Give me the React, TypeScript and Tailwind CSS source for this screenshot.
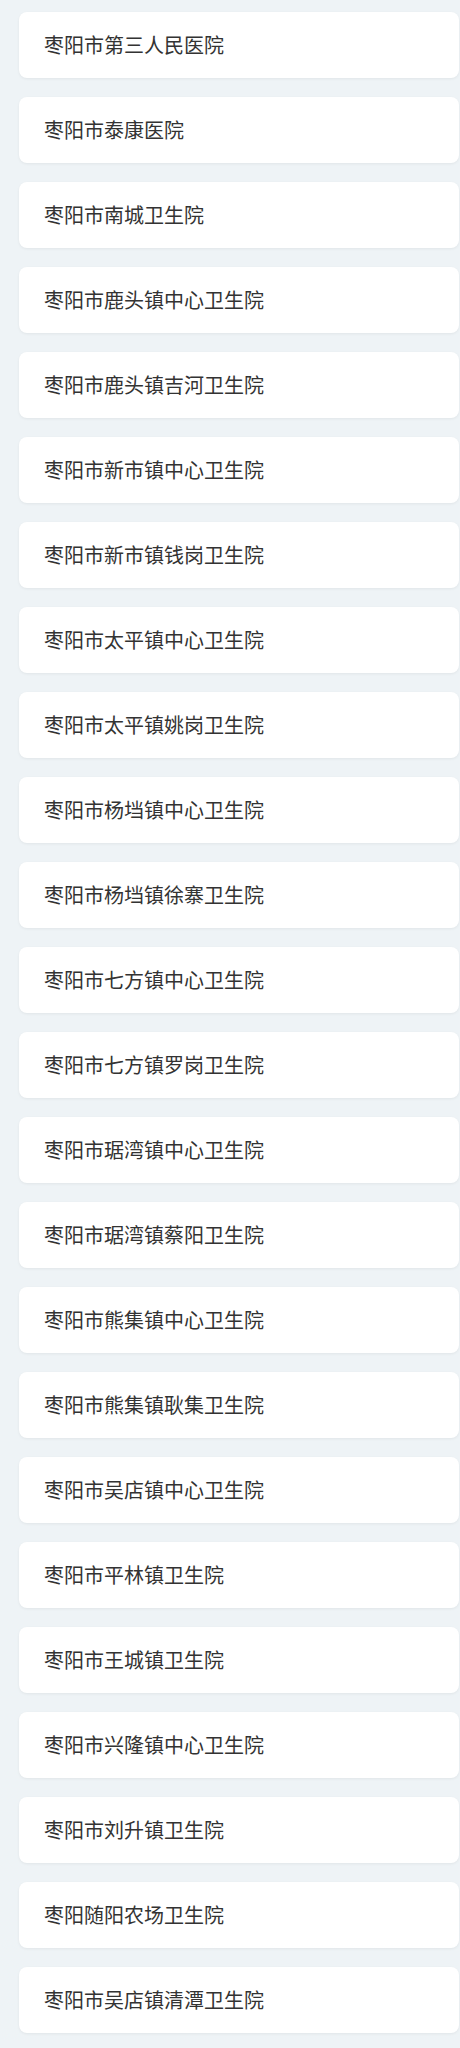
const hospitals = [
  "枣阳市第三人民医院",
  "枣阳市泰康医院",
  "枣阳市南城卫生院",
  "枣阳市鹿头镇中心卫生院",
  "枣阳市鹿头镇吉河卫生院",
  "枣阳市新市镇中心卫生院",
  "枣阳市新市镇钱岗卫生院",
  "枣阳市太平镇中心卫生院",
  "枣阳市太平镇姚岗卫生院",
  "枣阳市杨垱镇中心卫生院",
  "枣阳市杨垱镇徐寨卫生院",
  "枣阳市七方镇中心卫生院",
  "枣阳市七方镇罗岗卫生院",
  "枣阳市琚湾镇中心卫生院",
  "枣阳市琚湾镇蔡阳卫生院",
  "枣阳市熊集镇中心卫生院",
  "枣阳市熊集镇耿集卫生院",
  "枣阳市吴店镇中心卫生院",
  "枣阳市平林镇卫生院",
  "枣阳市王城镇卫生院",
  "枣阳市兴隆镇中心卫生院",
  "枣阳市刘升镇卫生院",
  "枣阳随阳农场卫生院",
  "枣阳市吴店镇清潭卫生院",
];

export default function App() {
  return (
    <div className="min-h-[2048px] bg-[#eef3f6] pt-[12px] pl-[19px] pr-[1px]">
      <div className="flex flex-col gap-[19px]">
        {hospitals.map((name) => (
          <div
            key={name}
            className="h-[66px] bg-white rounded-lg shadow-[0_1px_3px_rgba(0,0,0,0.06)] flex items-center pl-[25px] text-[20px] text-[#333] font-['Noto_Sans_CJK_SC',sans-serif]"
          >
            {name}
          </div>
        ))}
      </div>
    </div>
  );
}
